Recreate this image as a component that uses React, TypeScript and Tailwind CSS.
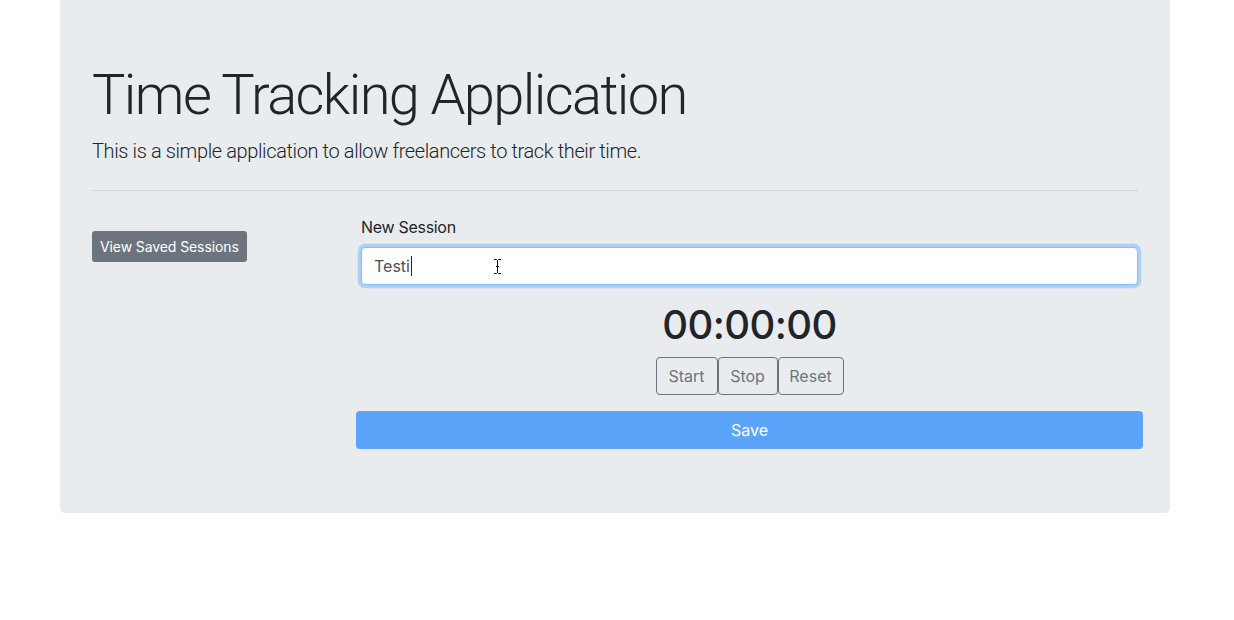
import React from 'react';

const font = { fontFamily: 'Inter, "Liberation Sans", sans-serif' };
const light = { fontFamily: 'Roboto, "Liberation Sans", sans-serif' };

function IBeam() {
  return (
    <svg
      className="absolute left-[131px] top-[10px]"
      width="9"
      height="17"
      viewBox="0 0 9 17"
    >
      <path
        d="M1 1.5h2.5L4.5 2.5L5.5 1.5H8M4.5 2.5V14.5M1 15.5h2.5L4.5 14.5L5.5 15.5H8M3 8.5h3"
        fill="none"
        stroke="#ffffff"
        strokeWidth="2.5"
      />
      <path
        d="M1 1.5h2.5L4.5 2.5L5.5 1.5H8M4.5 2.5V14.5M1 15.5h2.5L4.5 14.5L5.5 15.5H8M3 8.5h3"
        fill="none"
        stroke="#111111"
        strokeWidth="1"
      />
    </svg>
  );
}

export default function App() {
  return (
    <div className="min-h-[620px] bg-white text-[#212529]" style={font}>
      <div className="mx-[60px] w-[1110px] rounded-b-[5px] bg-[#e9ecef] px-8 pt-[63px] pb-16">
        {/* En-tête */}
        <h1 className="mb-2 h-[65px] text-[56px] font-light leading-[65px] tracking-[-1.6px]" style={light}>
          Time Tracking Application
        </h1>
        <p className="text-[20px] font-light leading-[30px] tracking-[-0.38px]" style={light}>
          This is a simple application to allow freelancers to track their time.
        </p>
        <hr className="my-6 border-t border-[#d3d5d8]" />

        <div className="flex">
          <div className="w-[269px] shrink-0">
            <button className="mt-4 rounded-[3px] bg-[#6c757d] px-2 py-[5px] text-[14px] leading-[21px] tracking-[-0.1px] text-white">
              View Saved Sessions
            </button>
          </div>

          <div className="flex-1">
            <label className="mb-2 block text-[16px] leading-6 tracking-[-0.3px]">New Session</label>
            <div className="relative mb-4 flex h-[38px] items-center rounded-[4px] border border-[#80bdff] bg-white px-3 text-[16px] text-[#495057] shadow-[0_0_0_3.2px_rgba(0,123,255,0.25)]">
              <span>Testi</span>
              <span className="ml-px h-[20px] w-px bg-[#212529]" />
              <IBeam />
            </div>

            {/* Chronomètre */}
            <div className="mb-2 text-center text-[40px] font-[450] leading-[48px] tracking-[-0.6px]">
              00:00:00
            </div>
            <div className="flex justify-center">
              <button className="h-[38px] w-[62px] rounded-[4px] border border-[#6c757d] text-[16px] text-[#6c757d]">
                Start
              </button>
              <button className="h-[38px] w-[60px] rounded-[4px] border border-[#6c757d] text-[16px] text-[#6c757d]">
                Stop
              </button>
              <button className="h-[38px] w-[66px] rounded-[4px] border border-[#6c757d] text-[16px] text-[#6c757d]">
                Reset
              </button>
            </div>

            <button className="-mx-[5px] mt-4 block h-[38px] w-[calc(100%+10px)] rounded-[4px] bg-[#5ba4f9] text-[16px] text-white">
              Save
            </button>
          </div>
        </div>
      </div>
    </div>
  );
}
